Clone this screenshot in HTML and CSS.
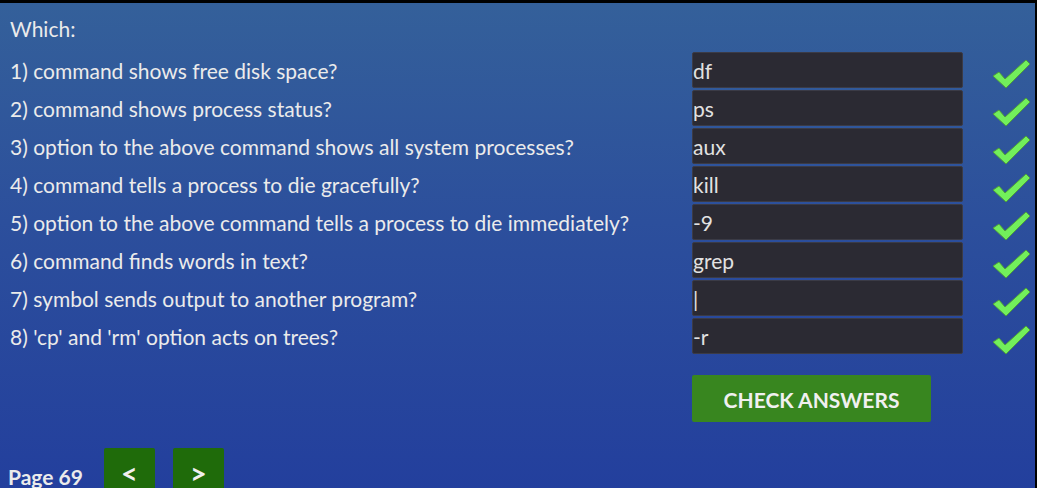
FILE: index.html
```html
<!DOCTYPE html>
<html>
<head>
<meta charset="utf-8">
<link rel="stylesheet" href="styles.css">
</head>
<body>
<div class="page">
  <div class="which">Which:</div>
  <div class="quiz">
    <div class="q">1) command shows free disk space?</div>
    <div class="ans">df</div>
    <div class="ok"><svg viewBox="0 0 40 30" width="40" height="30"><polygon points="2,17 8,13 14,20 35,1 39,5 15,29" /></svg></div>

    <div class="q">2) command shows process status?</div>
    <div class="ans">ps</div>
    <div class="ok"><svg viewBox="0 0 40 30" width="40" height="30"><polygon points="2,17 8,13 14,20 35,1 39,5 15,29" /></svg></div>

    <div class="q">3) option to the above command shows all system processes?</div>
    <div class="ans">aux</div>
    <div class="ok"><svg viewBox="0 0 40 30" width="40" height="30"><polygon points="2,17 8,13 14,20 35,1 39,5 15,29" /></svg></div>

    <div class="q">4) command tells a process to die gracefully?</div>
    <div class="ans">kill</div>
    <div class="ok"><svg viewBox="0 0 40 30" width="40" height="30"><polygon points="2,17 8,13 14,20 35,1 39,5 15,29" /></svg></div>

    <div class="q">5) option to the above command tells a process to die immediately?</div>
    <div class="ans">-9</div>
    <div class="ok"><svg viewBox="0 0 40 30" width="40" height="30"><polygon points="2,17 8,13 14,20 35,1 39,5 15,29" /></svg></div>

    <div class="q">6) command finds words in text?</div>
    <div class="ans">grep</div>
    <div class="ok"><svg viewBox="0 0 40 30" width="40" height="30"><polygon points="2,17 8,13 14,20 35,1 39,5 15,29" /></svg></div>

    <div class="q">7) symbol sends output to another program?</div>
    <div class="ans">|</div>
    <div class="ok"><svg viewBox="0 0 40 30" width="40" height="30"><polygon points="2,17 8,13 14,20 35,1 39,5 15,29" /></svg></div>

    <div class="q">8) 'cp' and 'rm' option acts on trees?</div>
    <div class="ans">-r</div>
    <div class="ok"><svg viewBox="0 0 40 30" width="40" height="30"><polygon points="2,17 8,13 14,20 35,1 39,5 15,29" /></svg></div>
  </div>
  <div class="actions">
    <button class="check">CHECK ANSWERS</button>
  </div>
  <div class="footer">
    <span class="pagenum">Page 69</span>
    <button class="nav">&lt;</button>
    <button class="nav">&gt;</button>
  </div>
</div>
</body>
</html>
```
FILE: styles.css
```css
html, body {
  margin: 0;
  padding: 0;
  height: 100%;
  overflow: hidden;
}
body {
  background: #000;
  font-family: Lato, "Liberation Sans", sans-serif;
  color: #ebebeb;
}
.page {
  margin-top: 3px;
  margin-right: 2px;
  height: 485px;
  background: linear-gradient(to bottom, #34609a 0%, #2c4f9c 45%, #233f9d 100%);
  overflow: hidden;
}
.which {
  font-size: 21px;
  line-height: 24px;
  padding: 14px 0 0 10px;
  height: 24px;
}
.quiz {
  margin-top: 11px;
  display: grid;
  grid-template-columns: 692px 271px 1fr;
  grid-auto-rows: 36px;
  row-gap: 2px;
  align-items: center;
}
.q {
  padding-left: 10px;
  font-size: 21px;
  line-height: 24px;
  padding-top: 2px;
  white-space: nowrap;
}
.ans {
  box-sizing: border-box;
  height: 36px;
  background: #2b2a33;
  border: 1px solid #3b3b46;
  border-radius: 2px;
  font-size: 21px;
  padding-left: 0;
  color: #e2e2e2;
  padding-top: 3px;
  line-height: 30px;
}
.ok {
  align-self: start;
  display: flex;
  padding-left: 28px;
  padding-top: 7px;
}
.ok svg {
  display: block;
}
.ok polygon {
  fill: #72ef5b;
  stroke: #4f9e3c;
  stroke-width: 1;
  stroke-linejoin: round;
}
.actions {
  margin-top: 21px;
  padding-left: 692px;
}
.check {
  width: 239px;
  height: 47px;
  background: #38861f;
  border: none;
  border-radius: 2px;
  color: #f0f0f0;
  font-family: Lato, "Liberation Sans", sans-serif;
  font-weight: bold;
  font-size: 21px;
  padding: 0;
  padding-top: 1px;
}
.footer {
  margin-top: 26px;
  padding-left: 8px;
  display: flex;
  align-items: flex-start;
}
.pagenum {
  font-weight: bold;
  font-size: 21px;
  margin-top: 17px;
  line-height: 24px;
  width: 96px;
}
.nav {
  width: 51px;
  height: 50px;
  background: #1f6b0a;
  border: none;
  border-radius: 2px;
  color: #f0f0f0;
  font-family: Lato, "Liberation Sans", sans-serif;
  font-weight: bold;
  font-size: 29px;
  line-height: 29px;
  padding: 10px 0 0 0;
  display: flex;
  justify-content: center;
  align-items: flex-start;
  margin-right: 18px;
}
```
